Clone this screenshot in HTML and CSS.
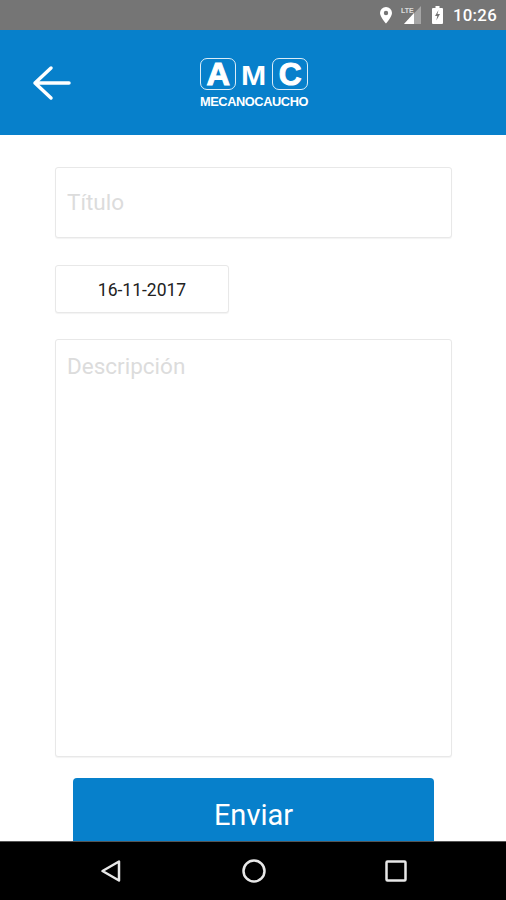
FILE: index.html

```html
<!DOCTYPE html>
<html lang="es">
<head>
  <meta charset="UTF-8">
  <title>Nueva solicitud</title>
  <link rel="stylesheet" href="styles.css">
</head>
<body>
  <div class="app">
    <div class="status-bar">
      <svg class="status-icon" width="14" height="18" viewBox="0 0 14 18">
        <path fill="#fff" fill-rule="evenodd" d="M7 1a6 6 0 0 0-6 6c0 4 6 10.500 6 10.500S13 11 13 7a6 6 0 0 0-6-6zm0 3.800a2.200 2.200 0 1 1 0 4.400 2.200 2.200 0 0 1 0-4.400z"/>
      </svg>
      <svg class="status-icon signal" width="22" height="20" viewBox="0 0 22 20">
        <path fill="#fff" d="M21 1v18H4z" opacity="0.35"/>
        <path fill="#fff" d="M14 8v11H4z"/>
        <text x="1" y="8" class="lte">LTE</text>
      </svg>
      <svg class="status-icon battery" width="11" height="18" viewBox="0 0 11 18">
        <path fill="#fff" d="M3.500 0h4v2H10a1 1 0 0 1 1 1v14a1 1 0 0 1-1 1H1a1 1 0 0 1-1-1V3a1 1 0 0 1 1-1h2.500z"/>
        <path fill="#757575" d="M6.500 4 3 10h2.300l-1 4.500L8 8H5.500z"/>
      </svg>
      <span class="clock">10:26</span>
    </div>

    <header class="toolbar">
      <svg class="back" width="40" height="36" viewBox="0 0 40 36">
        <path d="M37 18H3M19 3 3 18l16 15" fill="none" stroke="#fff" stroke-width="3.500" stroke-linecap="round" stroke-linejoin="round"/>
      </svg>
      <div class="logo">
        <div class="logo-letters">
          <span class="logo-box"><span class="logo-a">A</span></span>
          <span class="logo-mid">M</span>
          <span class="logo-box"><span class="logo-c">C</span></span>
        </div>
        <div class="logo-name">MECANOCAUCHO</div>
      </div>
    </header>

    <form class="content">
      <input class="field title" type="text" placeholder="Título">
      <div class="field date">16-11-2017</div>
      <textarea class="field description" placeholder="Descripción"></textarea>
      <button class="send" type="button">Enviar</button>
    </form>

    <nav class="nav-bar">
      <svg width="22" height="24" viewBox="0 0 22 24">
        <path d="M19 2.500v19L2.500 12z" fill="none" stroke="#e8e8e8" stroke-width="2.500" stroke-linejoin="round"/>
      </svg>
      <svg width="26" height="26" viewBox="0 0 26 26">
        <circle cx="13" cy="13" r="10.500" fill="none" stroke="#e8e8e8" stroke-width="2.500"/>
      </svg>
      <svg width="22" height="22" viewBox="0 0 22 22">
        <rect x="1.500" y="1.500" width="19" height="19" rx="1" fill="none" stroke="#e8e8e8" stroke-width="2.500"/>
      </svg>
    </nav>
  </div>
</body>
</html>
```

FILE: styles.css

```css
* { box-sizing: border-box; }
body { margin: 0; background: #fff; font-family: Roboto, "Liberation Sans", sans-serif; }
.app { display: flex; flex-direction: column; height: 900px; overflow: hidden; }

.status-bar { height: 30px; flex: none; background: #757575; display: flex; align-items: center; justify-content: flex-end; padding-right: 9px; color: #fff; }
.status-icon { margin-right: 7px; }
.status-icon.signal { margin-right: 10px; }
.status-icon.battery { margin-right: 10px; }
.lte { font: bold 7px "Liberation Sans", sans-serif; fill: #fff; opacity: 0.75; }
.clock { font-size: 16.800px; font-weight: 500; letter-spacing: 0.3px; }

.toolbar { height: 105px; flex: none; background: #0780cb; display: flex; align-items: center; position: relative; padding-left: 32px; }
.back { display: block; }
.logo { position: absolute; left: 200px; top: 28px; width: 108px; color: #fff; }
.logo-letters { display: flex; justify-content: space-between; align-items: center; height: 32px; }
.logo-box { width: 36px; height: 32px; border: 1.500px solid rgba(255,255,255,0.85); border-radius: 7px; display: flex; align-items: center; justify-content: center; font: bold 31px/1 "Liberation Sans", sans-serif; -webkit-text-stroke: 1px #fff; }
.logo-a { transform: scaleX(1.05); }
.logo-c { transform: scaleX(1.02); }
.logo-mid { font: bold 28px/1 "Liberation Sans", sans-serif; margin-top: 4px; transform: scaleX(1.08); }
.logo-name { font: bold 12.800px/1 "Liberation Sans", sans-serif; margin-top: 6px; white-space: nowrap; letter-spacing: -0.42px; text-align: center; }

.content { flex: 1; min-height: 0; overflow: hidden; display: flex; flex-direction: column; align-items: flex-start; padding: 32px 54px 0 55px; }
.field { display: block; border: 1px solid #e8e8e8; border-radius: 3px; background: #fff; box-shadow: 0 1px 1px rgba(0,0,0,0.05); font-family: inherit; outline: none; }
.title { width: 397px; height: 71px; padding: 0 11px 2px; font-size: 22.500px; flex: none; }
.date { width: 174px; height: 48px; margin-top: 27px; flex: none; display: flex; align-items: center; justify-content: center; font-size: 17.500px; color: #222; padding-top: 1px; }
.description { width: 397px; height: 418px; margin-top: 26px; padding: 13px 11px; font-size: 22.500px; resize: none; flex: none; }
.field::placeholder { color: #dcdcdc; opacity: 1; }
.send { flex: none; width: 361px; height: 70px; margin: 21px 0 0 18px; background: #0780cb; color: #fff; border: none; border-radius: 4px; font-family: inherit; font-size: 29px; padding: 4px 0 0; }

.nav-bar { height: 59px; flex: none; background: #000; border-top: 1px solid #555; display: flex; align-items: center; padding-left: 100px; gap: 118.500px; }
```
